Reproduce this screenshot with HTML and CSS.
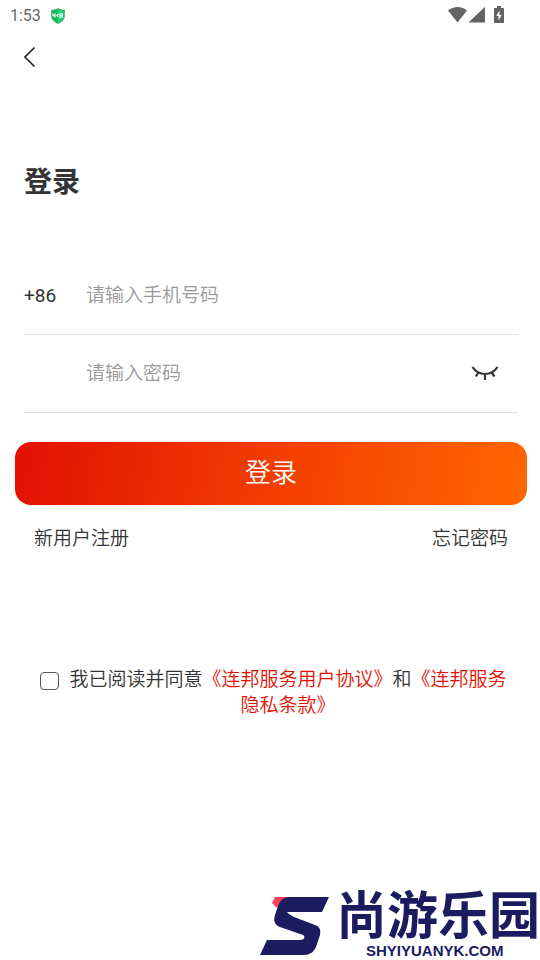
FILE: index.html
```
<!DOCTYPE html>
<html lang="zh-CN">
<head>
<meta charset="utf-8">
<meta name="viewport" content="width=device-width, initial-scale=1">
<title>登录</title>
<link rel="stylesheet" href="styles.css">
</head>
<body>
<div class="page">
  <div class="status">
    <span class="time">1:53</span>
    <svg class="shield" width="16" height="16" viewBox="0 0 16 16" aria-hidden="true">
      <path d="M8 .5C6 1.800 3.800 2.200 1.500 2.200V8c0 3.600 3 6.200 6.500 7.500 3.500-1.300 6.500-3.900 6.500-7.500V2.200C12.200 2.200 10 1.800 8 .5Z" fill="#12b85c" stroke="#55a84c" stroke-width=".7"/>
      <path d="M8 1.500V15c3-1.200 5.800-3.700 5.800-7V2.800C11.800 2.700 9.800 2.500 8 1.500Z" fill="#21d47b"/>
      <path d="M3 5.500v2.300h2.200M5 5.500v4M8.300 6 6.800 7.500l1.500 1.300M9.500 5.800h3.300M9.500 7.500h3.300M9.500 9.200h3.300M10 6v3M12.300 6v3" fill="none" stroke="#fff" stroke-width="1.100"/>
    </svg>
    <svg class="signals" width="58" height="18" viewBox="0 0 58 18" aria-hidden="true">
      <path d="M0 4.600C2.800 2 6 .9 9.500.9S16.200 2 19 4.600L9.500 16.500Z" fill="#636363"/>
      <path d="M37 .8V16.500H20.500Z" fill="#636363"/>
      <path d="M49 0h4v2h2.200c.6 0 .8.300.8.800v13.400c0 .6-.3.800-.8.800h-8.400c-.5 0-.8-.2-.8-.8V2.800c0-.5.300-.8.800-.8H49Z" fill="#636363"/>
      <path d="M51.500 4.500 48.300 10h2.200v4.500L53.700 9h-2.200Z" fill="#fff"/>
    </svg>
  </div>
  <header class="nav">
    <button class="back" type="button" aria-label="返回">
      <svg width="12" height="22" viewBox="0 0 12 22"><path d="M10.500 1.500 1 11l9.500 9.500" fill="none" stroke="#222" stroke-width="1.600"/></svg>
    </button>
  </header>
  <main>
    <h1>登录</h1>
    <form class="form">
      <div class="row">
        <label class="prefix" for="phone">+86</label>
        <input id="phone" type="tel" placeholder="请输入手机号码">
      </div>
      <div class="row">
        <label class="prefix" for="password" aria-label="密码"></label>
        <input id="password" type="password" placeholder="请输入密码">
        <button class="eye" type="button" aria-label="显示密码">
          <svg width="28" height="16" viewBox="0 0 28 16"><path d="M1.500 1C4.500 5.700 9 8 14 8s9.500-2.300 12.500-7M7.500 6.500 4.800 10.500M14 8v6M20.500 6.500l3 4" fill="none" stroke="#333" stroke-width="2.200"/></svg>
        </button>
      </div>
      <button class="submit" type="button">登录</button>
      <div class="links"><a href="#">新用户注册</a><a href="#">忘记密码</a></div>
      <div class="agree">
        <input id="agree" type="checkbox">
        <label for="agree">我已阅读并同意<a href="#">《连邦服务用户协议》</a>和<a href="#">《连邦服务隐私条款》</a></label>
      </div>
    </form>
  </main>
  <footer class="brand">
    <svg width="70" height="58" viewBox="0 0 70 58" aria-hidden="true">
      <path d="M15 0h20L20 11l-4-1-4-4Z" fill="#ff4058"/>
      <path d="M30 0h39l-7 15H27c1 2 4 3 7 5l21 8c5 2 6 5 5 10l-3 9c-2 7-6 11-13 11H0l7-15h33c4 0 6-3 3-5L20 30c-5-2-7-6-5-12l3-9c2-6 6-9 12-9Z" fill="#1b1b60"/>
    </svg>
    <div class="brand-text">
      <span class="brand-name">尚游乐园</span>
      <span class="brand-url">SHYIYUANYK.COM</span>
    </div>
  </footer>
</div>
</body>
</html>
```
FILE: styles.css
```
* { box-sizing: border-box; }
body {
  margin: 0;
  background: #fff;
  color: #333;
  font-family: Roboto, "Noto Sans CJK SC", sans-serif;
  font-size: 19px;
  font-weight: 350;
}
a { color: inherit; text-decoration: none; }
button { padding: 0; border: 0; background: none; font: inherit; cursor: pointer; }
svg { display: block; }
.page { display: flex; flex-direction: column; min-height: 100vh; }

.status { display: flex; align-items: center; height: 31px; padding: 0 34px 0 10px; }
.time { font-size: 16px; font-weight: 400; color: #666; }
.shield { margin-left: 9px; }
.signals { margin-left: auto; margin-bottom: 2px; }

.nav { height: 52px; padding: 0 24px; display: flex; align-items: center; }

h1 { margin: 78px 24px 0; font-size: 28px; line-height: 44px; font-weight: 700; }

.form { padding: 52px 13px 0 15px; }
.row {
  display: flex;
  align-items: center;
  height: 78px;
  margin: 0 9px;
  border-bottom: 1px solid #e0e0e0;
}
.prefix { flex: 0 0 62px; font-size: 19px; font-weight: 400; }
.row input {
  flex: 1;
  min-width: 0;
  padding: 0;
  border: 0;
  outline: 0;
  background: none;
  color: #333;
  font: inherit;
}
.row input::placeholder { color: #999; opacity: 1; }
.eye { margin-right: 19px; }

.submit {
  display: block;
  width: 100%;
  height: 63px;
  margin-top: 29px;
  padding-bottom: 6px;
  border-radius: 16px;
  background: linear-gradient(100deg, #e31004, #f33d02 50%, #ff6600);
  color: #fff;
  font-size: 26px;
}
.links { display: flex; justify-content: space-between; margin: 20px 19px 0; line-height: 28px; }

.agree { display: flex; align-items: flex-start; margin: 114px 13px 0 25px; line-height: 26px; }
.agree input {
  appearance: none;
  flex: none;
  width: 19px;
  height: 18px;
  margin: 5px 3px 0 0;
  border: 1px solid #555;
  border-radius: 4px;
  background: #fff;
}
.agree input:checked { background: #e31004; }
.agree label { flex: 1; text-align: center; }
.agree a { color: #e31004; }

.brand {
  display: flex;
  justify-content: flex-end;
  align-items: center;
  gap: 6px;
  margin-top: auto;
  color: #1b1b60;
}
.brand-text { display: flex; flex-direction: column; }
.brand-name { font-size: 51px; line-height: 50px; font-weight: 700; }
.brand-url { padding-left: 30px; font: 700 15px/18px "Liberation Sans", sans-serif; }
```
